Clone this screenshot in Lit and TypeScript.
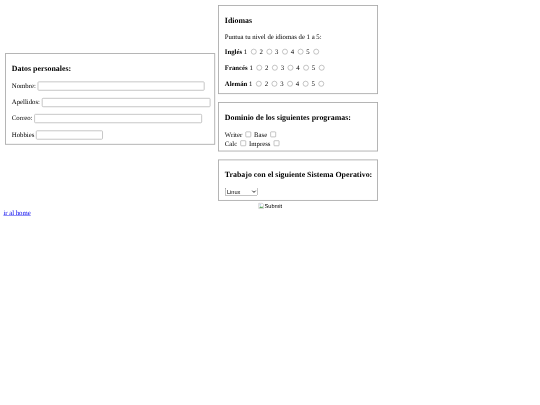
import { LitElement, html, css } from "lit";
import { customElement } from "lit/decorators.js";

@customElement("app-root")
export class AppRoot extends LitElement {
  static styles = css`
    :host { display: block; width: 540px; height: 405px; overflow: hidden; font-family: "Liberation Serif", serif; color: #000; text-rendering: geometricPrecision; }
    .frame { width: 540px; height: 405px; overflow: hidden; filter: blur(0.3px); background: #fff; }
    .page { transform: scale(0.421875); transform-origin: 0 0; width: 1280px; height: 960px; box-sizing: border-box; padding: 12px 8px 0; font-size: 16px; }
    form { display: block; }
    .cols { display: flex; align-items: flex-start; gap: 7px; margin-left: 4px; }
    .left { width: 498px; flex: none; margin-top: 114px; }
    .right { width: 379px; flex: none; display: flex; flex-direction: column; gap: 19px; }
    fieldset { margin: 0; border: 2px solid #a8a8a8; padding: 5.6px 12px 10px 14px; min-width: 0; display: block; box-sizing: border-box; }
    h3 { font-size: 18.72px; margin: 18.72px 0; font-weight: bold; white-space: nowrap; }
    p { margin: 16px 0; white-space: nowrap; line-height: 22px; }
    p.note { line-height: 18px; }
    p:last-child { margin-bottom: 0; }
    input[type="text"] { box-sizing: border-box; height: 22px; margin: 0; border: 2px solid #bdbdbd; border-radius: 3px; background: #fff; }
    input[type="radio"], input[type="checkbox"] { appearance: none; -webkit-appearance: none; box-sizing: border-box; width: 13px; height: 13px; border: 1.5px solid #767676; background: #fff; vertical-align: -1px; }
    input[type="radio"] { border-radius: 50%; margin: 0 3px 0 5px; }
    input[type="checkbox"] { border-radius: 2px; margin: 0 3px 0 4px; }
    .w1 { width: 396px; }
    .w2 { width: 400px; }
    .w3 { width: 398px; }
    .w4 { width: 159px; }
    .opts { margin-bottom: -4px; }
    .opts div { white-space: nowrap; line-height: 21px; }
    select { display: block; width: 78px; margin: 0; }
    .submit { margin-top: 4px; height: 16px; display: flex; align-items: center; justify-content: center; font: 13.33px/16px "Liberation Sans", sans-serif; }
    .submit svg { width: 16px; height: 16px; flex: none; }
    a { color: #00e; text-decoration: underline; display: block; }
  `;

  private langRow(name: string) {
    return html`<p><b>${name}</b> 1 <input type="radio" name=${name} /> 2
      <input type="radio" name=${name} /> 3
      <input type="radio" name=${name} /> 4
      <input type="radio" name=${name} /> 5
      <input type="radio" name=${name} /></p>`;
  }

  render() {
    return html`<div class="frame"><div class="page">
      <form>
        <div class="cols">
          <div class="left">
            <fieldset class="person">
              <h3>Datos personales:</h3>
              <p>Nombre: <input class="w1" type="text" /></p>
              <p>Apellidos: <input class="w2" type="text" /></p>
              <p>Correo: <input class="w3" type="text" /></p>
              <p>Hobbies <input class="w4" type="text" /></p>
            </fieldset>
          </div>
          <div class="right">
            <fieldset>
              <h3>Idiomas</h3>
              <p class="note">Puntua tu nivel de idiomas de 1 a 5:</p>
              ${this.langRow("Inglés")}
              ${this.langRow("Francés")}
              ${this.langRow("Alemán")}
            </fieldset>
            <fieldset>
              <h3>Dominio de los siguientes programas:</h3>
              <div class="opts">
                <div>Writer <input type="checkbox" /> Base <input type="checkbox" /></div>
                <div>Calc <input type="checkbox" /> Impress <input type="checkbox" /></div>
              </div>
            </fieldset>
            <fieldset>
              <h3>Trabajo con el siguiente Sistema Operativo:</h3>
              <select><option>Linux</option><option>Windows</option></select>
            </fieldset>
          </div>
        </div>
        <div class="submit">
          <svg viewBox="0 0 16 16" aria-hidden="true">
            <path d="M2.5 1.5h8l3 3v10h-11z" fill="#fff" stroke="#9a9a9a"/>
            <path d="M3.5 13l3-4 2 2 2-2 2 4z" fill="#5aa55a"/>
            <rect x="4" y="4" width="4" height="3" fill="#b8cdf0"/>
          </svg>Submit
        </div>
      </form>
      <a href="#">ir al home</a>
    </div></div>`;
  }
}
